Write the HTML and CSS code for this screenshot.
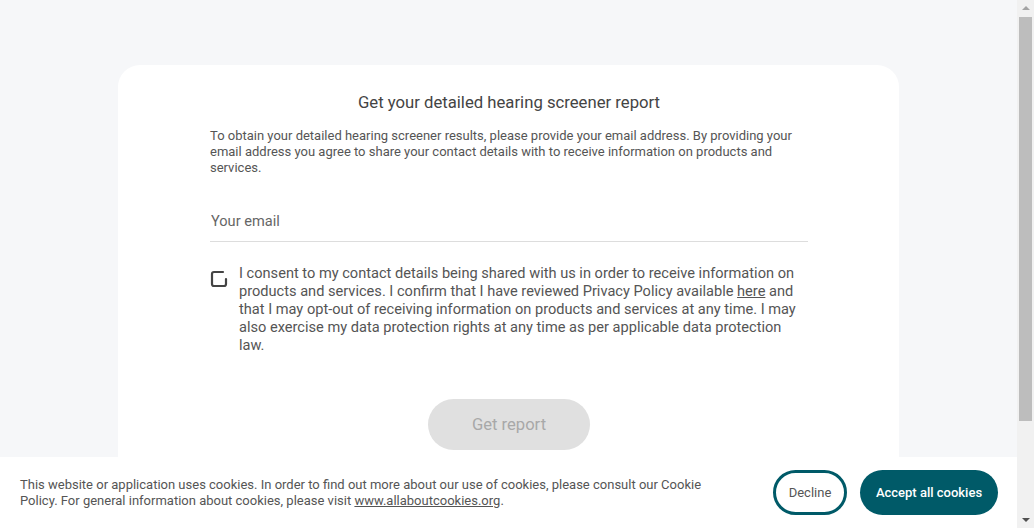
FILE: index.html
```html
<!DOCTYPE html>
<html lang="en">
<head>
<meta charset="utf-8">
<title>Hearing screener report</title>
<link rel="stylesheet" href="styles.css">
</head>
<body>
<div class="viewport">
  <main class="page">
    <section class="card">
      <h1 class="title">Get your detailed hearing screener report</h1>
      <p class="intro">To obtain your detailed hearing screener results, please provide your email address. By providing your email address you agree to share your contact details with to receive information on products and services.</p>
      <div class="field">
        <input class="email" type="email" placeholder="Your email">
      </div>
      <label class="consent">
        <span class="box">
          <svg width="20" height="20" viewBox="0 0 20 20"><path d="M14 3H5a2 2 0 0 0-2 2v10a2 2 0 0 0 2 2h10a2 2 0 0 0 2-2V10" fill="none" stroke="#444" stroke-width="2.2" stroke-linecap="round"/></svg>
        </span>
        <span class="consent-text">I consent to my contact details being shared with us in order to receive information on products and services. I confirm that I have reviewed Privacy Policy available <a href="#">here</a> and that I may opt-out of receiving information on products and services at any time. I may also exercise my data protection rights at any time as per applicable data protection law.</span>
      </label>
      <div class="actions">
        <button class="report" disabled>Get report</button>
      </div>
    </section>
  </main>
</div>
<div class="scrollbar">
  <span class="arrow up"></span>
  <span class="track"><span class="thumb"></span></span>
  <span class="arrow down"></span>
</div>
<div class="cookies">
  <p class="cookie-text">This website or application uses cookies. In order to find out more about our use of cookies, please consult our Cookie Policy. For general information about cookies, please visit <a href="#">www.allaboutcookies.org</a>.</p>
  <div class="cookie-buttons">
    <button class="decline">Decline</button>
    <button class="accept">Accept all cookies</button>
  </div>
</div>
</body>
</html>
```

FILE: styles.css
```css
html, body {
  margin: 0;
  padding: 0;
}
body {
  display: flex;
  height: 100vh;
  overflow: hidden;
  background: #f6f7f9;
  font-family: Roboto, "Liberation Sans", Arial, sans-serif;
  color: #555;
}
.viewport {
  flex: 1;
  overflow: hidden;
}
.page {
  padding: 65px 0 97px;
}
.card {
  width: 781px;
  margin: 0 auto;
  box-sizing: border-box;
  background: #fff;
  border-radius: 22px;
  padding: 28px 91px 100px 92px;
}
.title {
  margin: 0;
  text-align: center;
  font-size: 16.7px;
  font-weight: 400;
  line-height: 20px;
  color: #444;
}
.intro {
  margin: 15px 0 0;
  font-size: 13px;
  line-height: 16px;
  color: #555;
}
.field {
  margin-top: 26px;
  border-bottom: 1px solid #ddd;
}
.email {
  display: block;
  width: 100%;
  box-sizing: border-box;
  border: 0;
  outline: 0;
  background: transparent;
  font-family: inherit;
  font-size: 14.6px;
  color: #555;
  padding: 11px 1px 11px;
  line-height: 17px;
}
.email::placeholder {
  color: #666;
}
.consent {
  display: flex;
  gap: 10px;
  margin-top: 22px;
}
.box {
  flex: none;
  width: 20px;
  height: 20px;
  margin-top: 5px;
  margin-left: -1px;
}
.box svg {
  display: block;
}
.consent-text {
  font-size: 14.6px;
  line-height: 18px;
  color: #555;
}
.consent-text a {
  color: #555;
  text-decoration: underline;
}
.actions {
  display: flex;
  justify-content: center;
  margin-top: 45px;
}
.report {
  width: 162px;
  height: 51px;
  border: 0;
  border-radius: 26px;
  background: #e0e0e0;
  color: #a8a8a8;
  font-family: inherit;
  font-size: 16.6px;
}
.scrollbar {
  flex: none;
  width: 17px;
  height: 100vh;
  background: #f1f1f1;
  display: flex;
  flex-direction: column;
  align-items: center;
}
.arrow {
  flex: none;
  width: 0;
  height: 0;
  margin: 6px 0;
  border-left: 4px solid transparent;
  border-right: 4px solid transparent;
}
.arrow.up {
  border-bottom: 4px solid #a3a3a3;
}
.arrow.down {
  border-top: 4px solid #505050;
}
.track {
  flex: 1;
  width: 100%;
  display: flex;
  flex-direction: column;
  align-items: center;
}
.thumb {
  display: block;
  width: 13px;
  height: 404px;
  margin-top: 1px;
  background: #bdbdbd;
}
.cookies {
  position: fixed;
  left: 0;
  right: 17px;
  bottom: 0;
  height: 71px;
  background: #fff;
  display: flex;
  align-items: center;
  justify-content: space-between;
  padding: 0 19px 0 20px;
  box-sizing: border-box;
}
.cookie-text {
  margin: 0;
  width: 700px;
  font-size: 13px;
  line-height: 16px;
  color: #555;
}
.cookie-text a {
  color: #555;
  text-decoration: underline;
}
.cookie-buttons {
  display: flex;
  gap: 13px;
}
.decline {
  width: 74px;
  height: 45px;
  padding: 0;
  border: 3px solid #005a68;
  border-radius: 23px;
  background: #fff;
  color: #555;
  font-family: inherit;
  font-size: 13px;
}
.accept {
  width: 138px;
  height: 45px;
  padding: 0;
  border: 0;
  border-radius: 23px;
  background: #005a68;
  color: #fff;
  font-family: inherit;
  font-size: 13px;
  font-weight: 500;
}
```
